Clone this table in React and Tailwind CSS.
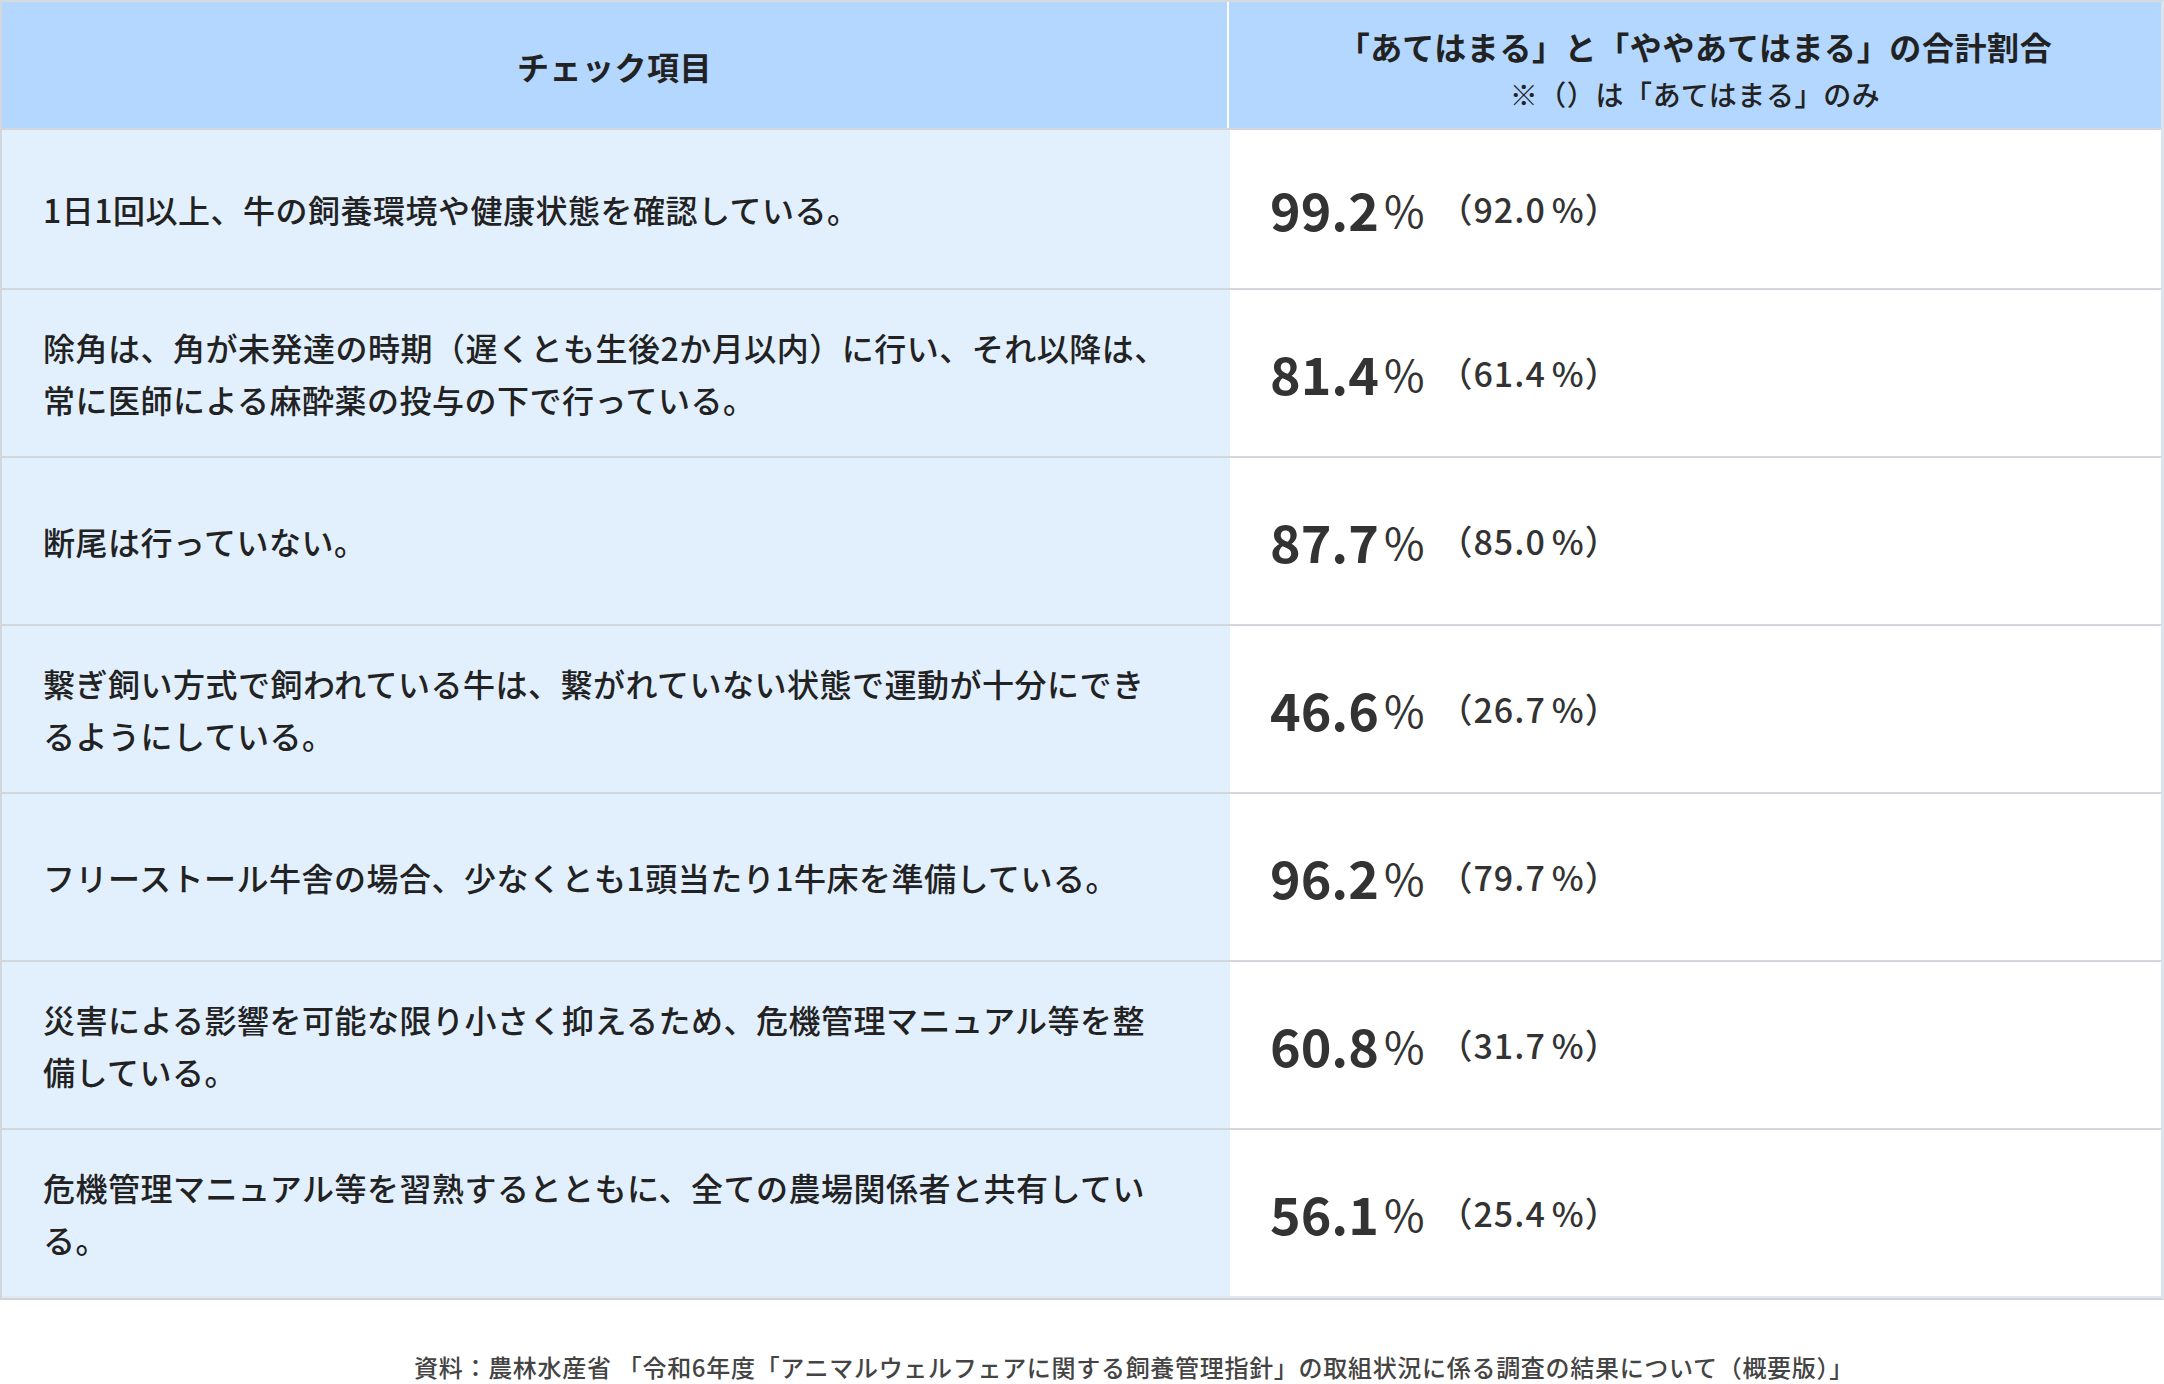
import React from "react";

const rows = [
  { text: "1日1回以上、牛の飼養環境や健康状態を確認している。", v: "99.2", p: "92.0", h: "h-[160px]" },
  { text: "除角は、角が未発達の時期（遅くとも生後2か月以内）に行い、それ以降は、常に医師による麻酔薬の投与の下で行っている。", v: "81.4", p: "61.4", h: "h-[168px]" },
  { text: "断尾は行っていない。", v: "87.7", p: "85.0", h: "h-[168px]" },
  { text: "繋ぎ飼い方式で飼われている牛は、繋がれていない状態で運動が十分にできるようにしている。", v: "46.6", p: "26.7", h: "h-[168px]" },
  { text: "フリーストール牛舎の場合、少なくとも1頭当たり1牛床を準備している。", v: "96.2", p: "79.7", h: "h-[168px]" },
  { text: "災害による影響を可能な限り小さく抑えるため、危機管理マニュアル等を整備している。", v: "60.8", p: "31.7", h: "h-[168px]" },
  { text: "危機管理マニュアル等を習熟するとともに、全ての農場関係者と共有している。", v: "56.1", p: "25.4", h: "h-[168px]" },
];

export default function App() {
  return (
    <div
      className="w-[2164px] h-[1384px] bg-white text-[#222]"
      style={{ fontFamily: '"Noto Sans CJK JP", "Noto Sans", sans-serif' }}
    >
      <div className="border-t-2 border-l-2 border-r-[3px] border-b-2 border-t-[#d6d9de] border-l-[#d3d6dc] border-r-[#dde3ec] border-b-[#cfd4da]">
        <div className="grid grid-cols-[1227px_1fr] h-[128px] border-b-2 border-[#d3d7dd] bg-[#b3d7fe]">
          <div className="flex items-center justify-center border-r-2 border-white text-[32px] font-bold tracking-[0.5px] pt-[2px]">
            チェック項目
          </div>
          <div className="flex flex-col items-center justify-center pt-[10px]">
            <div className="text-[32px] font-bold leading-[48px] tracking-[0.6px]">「あてはまる」と「ややあてはまる」の合計割合</div>
            <div className="text-[28px] font-medium leading-[48px] tracking-[0.6px]">※（）は「あてはまる」のみ</div>
          </div>
        </div>
        {rows.map((r, i) => (
          <div
            key={i}
            className={`grid grid-cols-[1228px_1fr] ${r.h} ${i === rows.length - 1 ? "border-b-2 border-[#e2e8ef]" : "border-b-2 border-[#d3d7dd]"}`}
          >
            <div className="flex items-center bg-[#e2f0fe] pl-[41px] pr-[56px] text-[32px] font-medium leading-[52px] tracking-[0.5px]">
              <span>{r.text}</span>
            </div>
            <div className="flex items-center bg-white pl-[40px] text-[#333]">
              <span className="text-[52px] font-bold leading-none">{r.v}</span>
              <span className="text-[44px] font-normal leading-none ml-[5px]">%</span>
              <span className="text-[34px] font-medium leading-none ml-[14px] tracking-[1px]">
                （{r.p}<span className="ml-[6px]">%</span>）
              </span>
            </div>
          </div>
        ))}
      </div>
      <div className="mt-[50px] pl-[104px] text-center text-[24px] font-medium text-[#444] leading-[34px] tracking-[0.7px]">
        資料：農林水産省 「令和6年度「アニマルウェルフェアに関する飼養管理指針」の取組状況に係る調査の結果について（概要版）」
      </div>
    </div>
  );
}
